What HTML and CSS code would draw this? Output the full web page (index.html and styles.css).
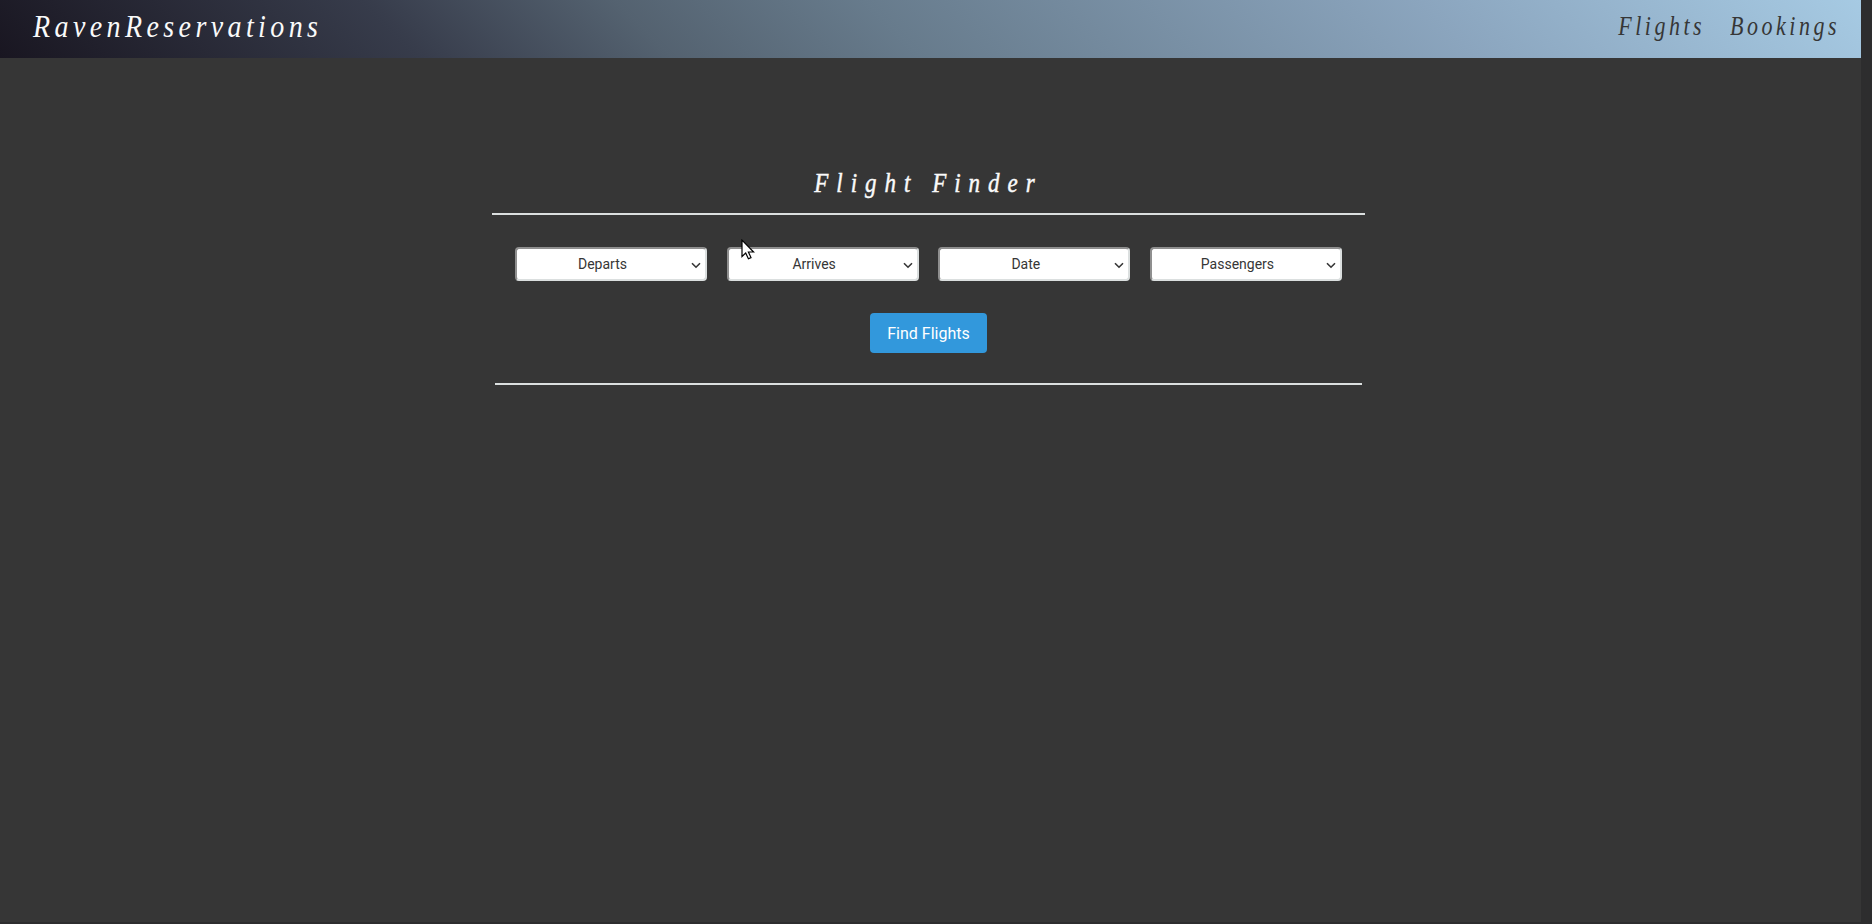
FILE: index.html
```html
<!DOCTYPE html>
<html lang="en">
<head>
<meta charset="utf-8">
<title>RavenReservations</title>
<link rel="stylesheet" href="styles.css">
</head>
<body>
<div class="page">
  <header class="navbar">
    <a class="brand">RavenReservations</a>
    <nav class="links"><a class="link flights">Flights</a><a class="link">Bookings</a></nav>
  </header>
  <main class="finder">
    <h1 class="title"><span class="title-text">Flight Finder</span></h1>
    <form class="form">
      <div class="fields">
        <div class="select"><span class="label">Departs</span><svg class="chevron" viewBox="0 0 10 7"><path d="M1 1.2 5 5.2 9 1.2"/></svg></div>
        <div class="select"><span class="label">Arrives</span><svg class="chevron" viewBox="0 0 10 7"><path d="M1 1.2 5 5.2 9 1.2"/></svg></div>
        <div class="select"><span class="label">Date</span><svg class="chevron" viewBox="0 0 10 7"><path d="M1 1.2 5 5.2 9 1.2"/></svg></div>
        <div class="select"><span class="label">Passengers</span><svg class="chevron" viewBox="0 0 10 7"><path d="M1 1.2 5 5.2 9 1.2"/></svg></div>
      </div>
      <button class="submit" type="button">Find Flights</button>
    </form>
  </main>
</div>
<svg class="cursor" viewBox="0 0 14 21"><path d="M1 1.2V17.5L4.7 14 7.4 19.7 10 18.6 7.4 13H12.6Z"/></svg>
</body>
</html>
```
FILE: styles.css
```css
* { box-sizing: border-box; }
body { margin: 0; background: #2d2d2e; overflow: hidden; font-family: Roboto, sans-serif; }
.page { width: 1861px; height: 922px; background: #363636; }
.navbar {
  height: 58px;
  padding: 0 21px 0 33px;
  display: flex;
  justify-content: space-between;
  align-items: center;
  background: linear-gradient(45deg, #191621 0%, #373c4b 22%, #546270 35%, #677b8c 48%, #8ba5be 77%, #a6cae3 100%);
}
.brand, .link, .title { font-family: "Liberation Serif", serif; font-style: italic; white-space: nowrap; }
.brand { font-size: 28px; line-height: 34px; letter-spacing: 4.4px; color: #fafafa; margin-top: -4px; transform: scaleY(1.1); }
.links { display: flex; gap: 25px; margin-top: -5px; }
.link { font-size: 22px; line-height: 32px; letter-spacing: 3.5px; color: #363636; transform: scaleY(1.2); }
.finder { width: 873px; margin-left: 492px; padding-top: 104px; }
.title {
  height: 53px;
  margin: 0;
  border-bottom: 2px solid #dbdfdf;
  font-size: 23px;
  font-weight: 400;
  line-height: 44px;
  letter-spacing: 8px;
  text-align: center;
  color: #fafafa;
  -webkit-text-stroke: 0.4px #fafafa;
}
.title-text { display: inline-block; transform: scaleY(1.15); }
.form {
  height: 170px;
  margin: 0 3px;
  padding: 32px 20px 0;
  border-bottom: 2px solid #dbdfdf;
  display: flex;
  flex-direction: column;
  align-items: center;
  gap: 32px;
}
.fields { width: 100%; display: flex; justify-content: space-between; }
.select {
  width: 192px;
  height: 34px;
  padding: 0 4px 0 0;
  display: flex;
  align-items: center;
  border: 2px solid;
  border-color: #8f8f8f #dbdfdf #dbdfdf #8f8f8f;
  border-radius: 4px;
  background: #fff;
  color: #363636;
  font-size: 14px;
}
.label { flex: 1; text-align: center; line-height: 20px; padding-right: 3px; }
.chevron { width: 10px; height: 7px; fill: none; stroke: #363636; stroke-width: 1.6; margin-top: 2px; }
.submit {
  width: 117px;
  height: 40px;
  padding: 0;
  border: 0;
  border-radius: 4px;
  background: #3298dc;
  color: #fff;
  font: 16px Roboto, sans-serif;
}
.cursor { position: absolute; left: 741px; top: 239px; width: 14px; height: 21px; fill: #fff; stroke: #000; stroke-width: 1.2; }
```
